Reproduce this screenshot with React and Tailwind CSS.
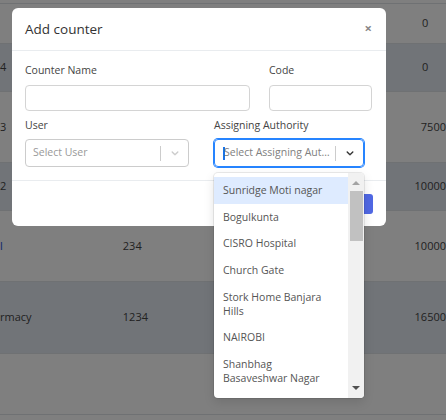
import React from "react";

const font = { fontFamily: '"Open Sans", "Noto Sans", Arial, sans-serif' };

const rows = [
  { h: "h-[40px]", dark: false, c1: "", c2: "", c3: "0" },
  { h: "h-[48px]", dark: true, c1: "4", c2: "", c3: "0" },
  { h: "h-[71px]", dark: false, c1: "3", c2: "", c3: "7500" },
  { h: "h-[48px]", dark: true, c1: "2", c2: "", c3: "10000" },
  { h: "h-[71px]", dark: false, c1: "l", link: true, c2: "234", c3: "10000" },
  { h: "h-[72px]", dark: true, c1: "rmacy", c2: "1234", c3: "16500" },
  { h: "h-[61px]", dark: false, c1: "", c2: "", c3: "" },
];

const options = [
  ["Sunridge Moti nagar"],
  ["Bogulkunta"],
  ["CISRO Hospital"],
  ["Church Gate"],
  ["Stork Home Banjara", "Hills"],
  ["NAIROBI"],
  ["Shanbhag", "Basaveshwar Nagar"],
];

function Chevron({ color }) {
  return (
    <svg width="12" height="12" viewBox="0 0 20 20" fill={color}>
      <path d="M4.516 7.548c0.436-0.446 1.043-0.481 1.576 0l3.908 3.747 3.908-3.747c0.533-0.481 1.141-0.446 1.574 0 0.436 0.445 0.408 1.197 0 1.615-0.406 0.418-4.695 4.502-4.695 4.502-0.217 0.223-0.502 0.335-0.787 0.335s-0.57-0.112-0.789-0.335c0 0-4.287-4.084-4.695-4.502s-0.436-1.170 0-1.615z" />
    </svg>
  );
}

export default function App() {
  return (
    <div className="relative w-[446px] h-[420px] overflow-hidden bg-white" style={font}>
      {/* background table */}
      <div className="pt-[3px] border-b border-[#dee2e6]">
        {rows.map((r, i) => (
          <div
            key={i}
            className={`${r.h} flex items-center border-t border-[#dee2e6] text-[11px] text-[#444] ${r.dark ? "bg-[#e2e8f0]" : "bg-white"}`}
          >
            <div className={`w-[125px] ${r.link ? "text-[#1d4ed8]" : ""}`}>{r.c1}</div>
            <div className="w-[297px]">{r.c2}</div>
            <div className="flex-1 whitespace-nowrap">{r.c3}</div>
          </div>
        ))}
      </div>
      <div className="h-[10px]" />

      {/* overlay */}
      <div className="absolute inset-0 bg-black/50" />

      {/* modal */}
      <div className="absolute left-[12px] top-[8px] w-[374px] h-[218px] bg-white rounded-[6px] flex flex-col">
        <div className="h-[43px] px-[13px] flex items-center justify-between border-b border-[#e9ecef]">
          <div className="text-[13.5px] text-[#333] mt-[1px]">Add counter</div>
          <div className="text-[13px] font-bold text-[#888] pr-[1px] -mt-[1px]">×</div>
        </div>
        <div className="pl-[13px] pr-[14px] pt-[12px] pb-[13px] border-b border-[#e9ecef]">
          <div className="flex gap-[19px]">
            <div className="w-[225px]">
              <div className="text-[10.5px] leading-[14px] text-[#444] mb-[8px]">Counter Name</div>
              <div className="h-[26px] border border-[#d4d4d4] rounded-[4px]" />
            </div>
            <div className="w-[103px]">
              <div className="text-[10.5px] leading-[14px] text-[#444] mb-[8px]">Code</div>
              <div className="h-[26px] border border-[#d4d4d4] rounded-[4px]" />
            </div>
          </div>
          <div className="flex gap-[25px] mt-[7px]">
            <div className="w-[164px]">
              <div className="text-[10.5px] leading-[14px] text-[#444] mb-[7px]">User</div>
              <div className="h-[28px] border border-[#cccccc] rounded-[4px] flex items-center pl-[7px]">
                <div className="flex-1 text-[10.5px] text-[#999]">Select User</div>
                <div className="w-px h-[15px] bg-[#ccc]" />
                <div className="w-[27px] flex justify-center">
                  <Chevron color="#cccccc" />
                </div>
              </div>
            </div>
            <div className="w-[150px]">
              <div className="text-[10.5px] leading-[14px] text-[#444] mb-[7px] whitespace-nowrap">Assigning Authority</div>
              <div className="h-[28px] border border-[#2684ff] shadow-[0_0_0_1px_#2684ff] rounded-[4px] flex items-center pl-[8px]">
                <div className="flex-1 min-w-0 flex items-center text-[10.5px] text-[#808080] whitespace-nowrap overflow-hidden">
                  <span className="w-[2px] h-[13px] bg-[#1a73e8] -mr-[1px] shrink-0" />
                  <span className="truncate">Select Assigning Authority</span>
                </div>
                <div className="w-px h-[15px] bg-[#ccc] ml-[4px]" />
                <div className="w-[27px] flex justify-center">
                  <Chevron color="#333333" />
                </div>
              </div>
            </div>
          </div>
        </div>
        <div className="flex-1 flex items-center justify-end pr-[13px]">
          <div className="h-[20px] px-[10px] rounded-[3px] bg-[#5068e4] text-white text-[10px] flex items-center">Save Location</div>
        </div>
      </div>

      {/* dropdown menu */}
      <div className="absolute left-[214px] top-[173px] w-[150px] h-[225px] bg-white rounded-[4px] shadow-[0_0_0_1px_rgba(0,0,0,0.08),0_4px_11px_rgba(0,0,0,0.12)] flex overflow-hidden">
        <div className="flex-1 pt-[4px] overflow-hidden">
          {options.map((o, i) => (
            <div
              key={i}
              className={`px-[9px] py-[6.3px] text-[10.5px] leading-[14px] text-[#555] ${i === 0 ? "bg-[#deebff]" : ""}`}
            >
              {o.map((l, j) => (
                <div key={j}>{l}</div>
              ))}
            </div>
          ))}
        </div>
        <div className="w-[16px] bg-[#f1f1f1] flex flex-col items-center">
          <div className="h-[18px] flex items-center justify-center pt-[2px]">
            <div className="w-0 h-0 border-l-[4px] border-r-[4px] border-b-[4px] border-l-transparent border-r-transparent border-b-[#a3a3a3]" />
          </div>
          <div className="w-[13px] h-[50px] bg-[#c1c1c1]" />
          <div className="flex-1" />
          <div className="h-[18px] flex items-center justify-center pb-[2px]">
            <div className="w-0 h-0 border-l-[4px] border-r-[4px] border-t-[4px] border-l-transparent border-r-transparent border-t-[#505050]" />
          </div>
        </div>
      </div>
    </div>
  );
}
